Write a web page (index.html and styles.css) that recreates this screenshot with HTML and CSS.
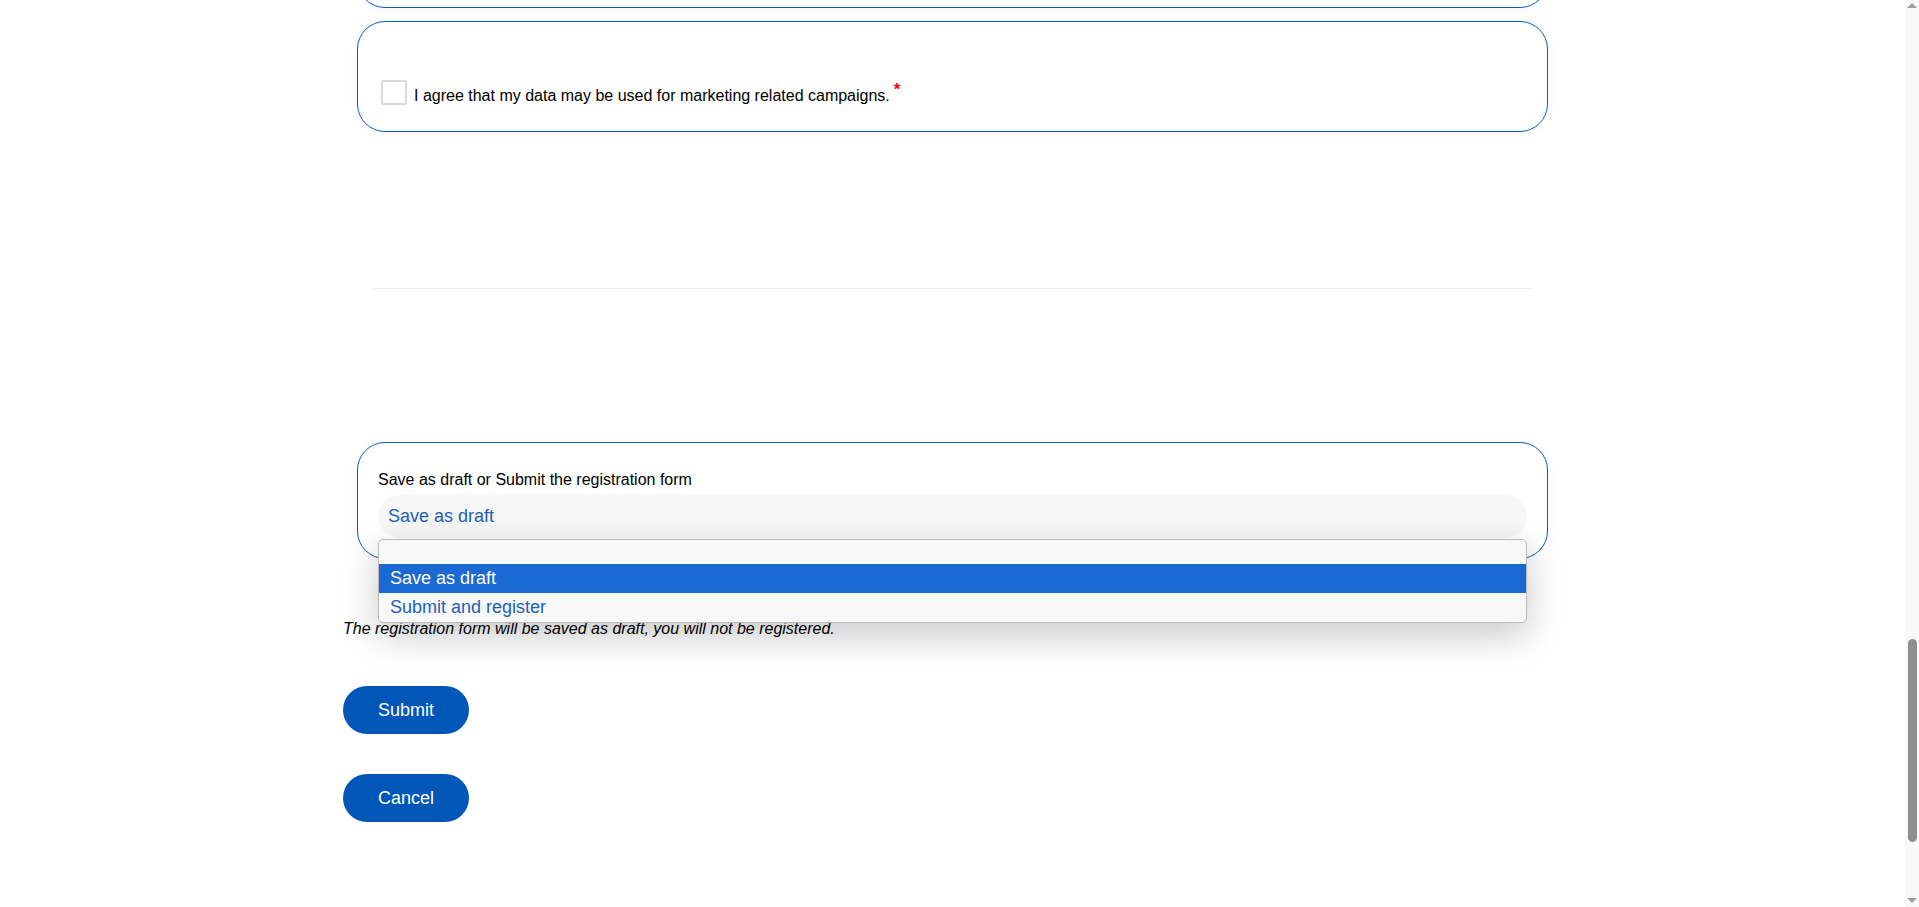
FILE: index.html
```html
<!DOCTYPE html>
<html lang="en">
<head>
    <meta charset="UTF-8">
    <meta name="viewport" content="width=device-width, initial-scale=1.0">
    <title>Registration Form</title>
    <link rel="stylesheet" href="styles.css">
</head>
<body>

    <div class="page">
        <div class="form-wrap">

            <!-- end of the previous field -->
            <div class="field-card prev-card"></div>

            <!-- Consent -->
            <div class="field-card consent-card">
                <label class="check-row">
                    <span class="checkbox"></span>
                    <span class="check-text">I agree that my data may be used for marketing related campaigns.</span>
                    <span class="required">*</span>
                </label>
            </div>

            <hr class="divider">

            <!-- Action select -->
            <div class="field-card action-card">
                <div class="field-label">Save as draft or Submit the registration form</div>
                <div class="select-wrap">
                    <div class="select-box">Save as draft</div>
                    <div class="select-menu">
                        <div class="option option-empty"></div>
                        <div class="option option-active">Save as draft</div>
                        <div class="option">Submit and register</div>
                    </div>
                </div>
            </div>

            <p class="hint">The registration form will be saved as draft, you will not be registered.</p>

            <button type="button" class="btn">Submit</button>
            <button type="button" class="btn">Cancel</button>
        </div>
    </div>

    <!-- scrollbar -->
    <div class="scrollbar">
        <span class="arrow-up"></span>
        <span class="track-space"></span>
        <span class="thumb"></span>
        <span class="track-end"></span>
        <span class="arrow-down"></span>
    </div>

</body>
</html>
```

FILE: styles.css
```css
html, body {
    margin: 0;
    padding: 0;
    height: 100%;
}
body {
    font-family: "Liberation Sans", Arial, sans-serif;
    color: #000;
    background: #fff;
    display: flex;
    overflow: hidden;
}
.page {
    flex: 1;
    height: 100vh;
    overflow: hidden;
}
.form-wrap {
    width: 1219px;
    margin: 0 auto;
}
.field-card {
    margin: 0 14px;
    border: 1px solid #0a5bbd;
    border-radius: 28px;
    background: #fff;
    box-sizing: border-box;
    box-shadow: 0 0 10px rgba(0, 0, 0, 0.05);
}
.prev-card {
    height: 68px;
    margin-top: -60px;
}
.consent-card {
    margin-top: 13px;
    height: 111px;
    padding: 58px 20px 0 23px;
}
.check-row {
    display: flex;
    align-items: center;
    font-size: 16px;
    line-height: 18px;
}
.checkbox {
    width: 26px;
    height: 25px;
    box-sizing: border-box;
    border: 2px solid #dadada;
    border-radius: 2px;
    margin-right: 7px;
    background: #fff;
}
.check-text {
    padding-top: 6px;
}
.required {
    color: #f00;
    font-size: 17px;
    font-weight: bold;
    line-height: 18px;
    align-self: flex-start;
    margin-left: 4px;
    margin-top: 1px;
}
.divider {
    border: 0;
    border-top: 1px solid #ececec;
    margin: 156px 30px 153px;
    height: 0;
}
.action-card {
    padding: 28px 20px 20px;
}
.field-label {
    font-size: 16px;
    line-height: 18px;
    margin-bottom: 6px;
}
.select-wrap {
    position: relative;
}
.select-box {
    height: 43px;
    line-height: 43px;
    background: #f7f7f7;
    border-radius: 22px;
    padding: 0 10px;
    font-size: 18px;
    color: #1d60b8;
}
/* open native dropdown */
.select-menu {
    position: absolute;
    top: calc(100% + 1px);
    left: 0;
    right: 0;
    z-index: 5;
    background: #f8f8f8;
    border: 1px solid #b9b9b9;
    border-radius: 5px;
    box-shadow: 0 12px 36px rgba(0, 0, 0, 0.22);
    overflow: hidden;
}
.option {
    height: 29px;
    line-height: 29px;
    padding: 0 11px;
    font-size: 18px;
    color: #1d60b8;
}
.option-empty {
    height: 24px;
}
.option-active {
    background: #1b69d3;
    color: #fff;
}
.hint {
    font-style: italic;
    font-size: 16px;
    line-height: 18px;
    margin: 61px 0 48px;
}
.btn {
    display: block;
    width: 126px;
    height: 48px;
    border: none;
    border-radius: 24px;
    background: #0057b8;
    color: #fff;
    font-family: "Liberation Sans", Arial, sans-serif;
    font-size: 18px;
    padding: 0;
    margin-bottom: 40px;
    cursor: pointer;
}
.scrollbar {
    width: 14px;
    height: 100vh;
    background: #f9f9f9;
    display: flex;
    flex-direction: column;
    align-items: center;
}
.arrow-up, .arrow-down {
    width: 0;
    height: 0;
    border-left: 5px solid transparent;
    border-right: 5px solid transparent;
}
.arrow-up {
    margin-top: 3px;
    border-bottom: 5px solid #a0a0a0;
}
.arrow-down {
    margin-bottom: 4px;
    border-top: 5px solid #a0a0a0;
}
.track-space {
    flex: 1;
}
.thumb {
    width: 9px;
    height: 203px;
    border-radius: 5px;
    background: #8f8f8f;
}
.track-end {
    height: 56px;
}
```
